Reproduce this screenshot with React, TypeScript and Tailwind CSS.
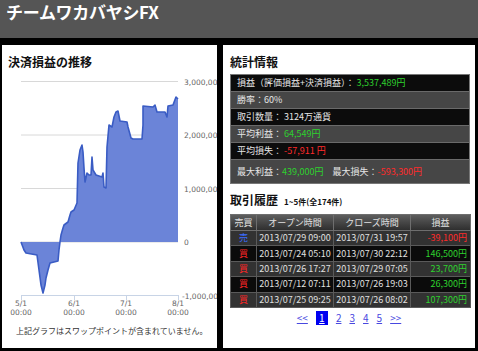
import React from 'react'

const pts: [number, number][] = [
  [21, 242], [24, 250], [26, 253], [37, 255], [39, 270], [41, 285], [43, 293], [45, 285], [46, 278],
  [48, 270], [50, 263], [58, 261], [59, 250], [60, 242], [61, 235], [63, 228], [64, 225], [68, 222],
  [70, 215], [71, 212], [74, 210], [77, 203], [78, 163], [80, 150], [82, 145], [83, 152], [84, 168],
  [85, 182], [87, 173], [89, 175], [91, 175], [92, 157], [93, 170], [96, 175], [102, 177], [103, 173],
  [104, 187], [106, 188], [107, 147], [109, 125], [112, 127], [114, 117], [116, 112], [118, 111],
  [120, 121], [127, 122], [128, 127], [131, 138], [133, 139], [142, 139], [143, 125], [143, 106],
  [153, 107], [155, 105], [157, 112], [165, 112], [167, 117], [168, 106], [173, 105], [176, 97], [178, 99],
]

const line = pts.map(p => p.join(',')).join(' ')
const area = `${line} 178,242 21,242`

const grid = [
  { y: 81.5, label: '3,000,000' },
  { y: 135, label: '2,000,000' },
  { y: 188.5, label: '1,000,000' },
  { y: 242, label: '0' },
  { y: 295.5, label: '-1,000,000' },
]

const ticks = [
  { x: 21, label: '5/1' },
  { x: 74, label: '6/1' },
  { x: 126, label: '7/1' },
  { x: 178, label: '8/1' },
]

function ProfitChart() {
  return (
    <svg width={215} height={245} className="block">
      <g transform="translate(-2,-75)" fontFamily="'DejaVu Sans', sans-serif">
        {grid.slice(0, 4).map(g => (
          <line key={g.y} x1={21} x2={178} y1={g.y} y2={g.y} stroke="#d8d8d8" strokeWidth={1} />
        ))}
        <polygon points={area} fill="#6b84d8" />
        <polyline points={line} fill="none" stroke="#3a5cc4" strokeWidth={1.6} strokeLinejoin="round" />
        <line x1={21} x2={178} y1={295.5} y2={295.5} stroke="#c8d4e6" strokeWidth={1} />
        {ticks.map(t => (
          <g key={t.x}>
            <line x1={t.x + 0.5} x2={t.x + 0.5} y1={295} y2={300} stroke="#c8d4e6" />
            <text x={t.x} y={306} fontSize="7.5" fill="#666" textAnchor="middle">{t.label}</text>
            <text x={t.x} y={315} fontSize="7.5" fill="#666" textAnchor="middle">00:00</text>
          </g>
        ))}
        {grid.map(g => (
          <text key={g.label} x={g.label.startsWith('-') ? 182 : 184} y={g.y + 3} fontSize="7.5" fill="#666">
            {g.label}
          </text>
        ))}
      </g>
    </svg>
  )
}

const stats = [
  { bg: 'bg-[#0c0c0c]', h: 'h-[17px]', content: <>損益（評価損益+決済損益）： <span className="text-[#2ed12e]">3,537,489円</span></> },
  { bg: 'bg-[#464646]', h: 'h-[17px]', content: <>勝率：60%</> },
  { bg: 'bg-[#0c0c0c]', h: 'h-[17px]', content: <>取引数量： 3124万通貨</> },
  { bg: 'bg-[#464646]', h: 'h-[17px]', content: <>平均利益： <span className="text-[#2ed12e]">64,549円</span></> },
  { bg: 'bg-[#0c0c0c]', h: 'h-[17px]', content: <>平均損失： <span className="text-[#ff2a2a]">-57,911 円</span></> },
  {
    bg: 'bg-[#464646]', h: 'h-[23px]',
    content: <>最大利益：<span className="text-[#2ed12e]">439,000円</span>　最大損失：<span className="text-[#ff2a2a]">-593,300円</span></>,
  },
]

const trades = [
  { side: '売', open: '2013/07/29 09:00', close: '2013/07/31 19:57', pl: '-39,100円', loss: true },
  { side: '買', open: '2013/07/24 05:10', close: '2013/07/30 22:12', pl: '146,500円', loss: false },
  { side: '買', open: '2013/07/26 17:27', close: '2013/07/29 07:05', pl: '23,700円', loss: false },
  { side: '買', open: '2013/07/12 07:11', close: '2013/07/26 19:03', pl: '26,300円', loss: false },
  { side: '買', open: '2013/07/25 09:25', close: '2013/07/26 08:02', pl: '107,300円', loss: false },
]

export default function App() {
  return (
    <div
      className="w-[478px] h-[351px] bg-black overflow-hidden"
      style={{ fontFamily: "'Noto Sans CJK JP', 'Noto Sans', sans-serif" }}
    >
      <div className="h-[38px] bg-[#555555] pl-[6px] pt-[1px]">
        <h1 className="text-white text-[17px] font-bold leading-[22px] tracking-[-0.3px]">チームワカバヤシFX</h1>
      </div>

      <div className="flex gap-[6px] pl-[2px] pt-[7px]">
        {/* 左：損益グラフ */}
        <div className="w-[215px] h-[303px] bg-white flex flex-col">
          <h2 className="h-[30px] pl-[6px] pt-[9px] text-[12px] font-bold leading-[16px] text-[#111]">決済損益の推移</h2>
          <ProfitChart />
          <p className="pl-[14px] text-[8px] leading-[12px] text-[#333] mt-[5px]">
            上記グラフはスワップポイントが含まれていません。
          </p>
        </div>

        {/* 右：統計情報と取引履歴 */}
        <div className="w-[252px] h-[303px] bg-white pl-[7px] pr-[5px]">
          <h2 className="h-[29px] pt-[9px] text-[12px] font-bold leading-[16px] text-[#111]">統計情報</h2>
          <div className="border border-[#777] text-[9px] text-[#e6e6e6]">
            {stats.map((s, i) => (
              <div
                key={i}
                className={`${s.bg} ${s.h} flex items-center pl-[6px] ${i < stats.length - 1 ? 'border-b border-[#6a6a6a]' : ''}`}
              >
                <span className="leading-[12px] whitespace-nowrap">{s.content}</span>
              </div>
            ))}
          </div>

          <div className="flex items-baseline gap-[6px] mt-[8px] h-[22px]">
            <h2 className="text-[12px] font-bold leading-[16px] text-[#111]">取引履歴</h2>
            <span className="text-[8px] font-bold text-[#111]">1~5件(全174件)</span>
          </div>

          <table className="w-[240px] border-collapse text-[9px] text-[#e0e0e0] table-fixed">
            <colgroup>
              <col className="w-[26px]" />
              <col className="w-[77px]" />
              <col className="w-[77px]" />
              <col className="w-[60px]" />
            </colgroup>
            <thead>
              <tr className="h-[16px] bg-gradient-to-b from-[#5e5e5e] to-[#2c2c2c]">
                {['売買', 'オープン時間', 'クローズ時間', '損益'].map(h => (
                  <th key={h} className="border border-[#6e6e6e] font-normal leading-[12px] p-0">{h}</th>
                ))}
              </tr>
            </thead>
            <tbody>
              {trades.map((t, i) => (
                <tr key={i} className={`h-[15.4px] ${i % 2 === 0 ? 'bg-[#323232]' : 'bg-[#0b0b0b]'}`}>
                  <td className={`border border-[#5a5a5a] text-center p-0 leading-[12px] ${t.side === '売' ? 'text-[#3b6cff]' : 'text-[#ff2626]'}`}>
                    {t.side}
                  </td>
                  <td className="border border-[#5a5a5a] text-center p-0 leading-[12px]">{t.open}</td>
                  <td className="border border-[#5a5a5a] text-center p-0 leading-[12px]">{t.close}</td>
                  <td className={`border border-[#5a5a5a] text-right pr-[3px] p-0 leading-[12px] ${t.loss ? 'text-[#ff2a2a]' : 'text-[#2ed12e]'}`}>
                    {t.pl}
                  </td>
                </tr>
              ))}
            </tbody>
          </table>

          <div className="flex justify-center items-center gap-[8px] mt-[3px] text-[10px] leading-[14px] text-[#4848e0] pr-[2px]">
            <span className="underline">&lt;&lt;</span>
            <span className="underline bg-[#0000f0] text-white w-[12px] h-[14px] text-center">1</span>
            <span className="underline">2</span>
            <span className="underline">3</span>
            <span className="underline">4</span>
            <span className="underline">5</span>
            <span className="underline">&gt;&gt;</span>
          </div>
        </div>
      </div>
    </div>
  )
}
